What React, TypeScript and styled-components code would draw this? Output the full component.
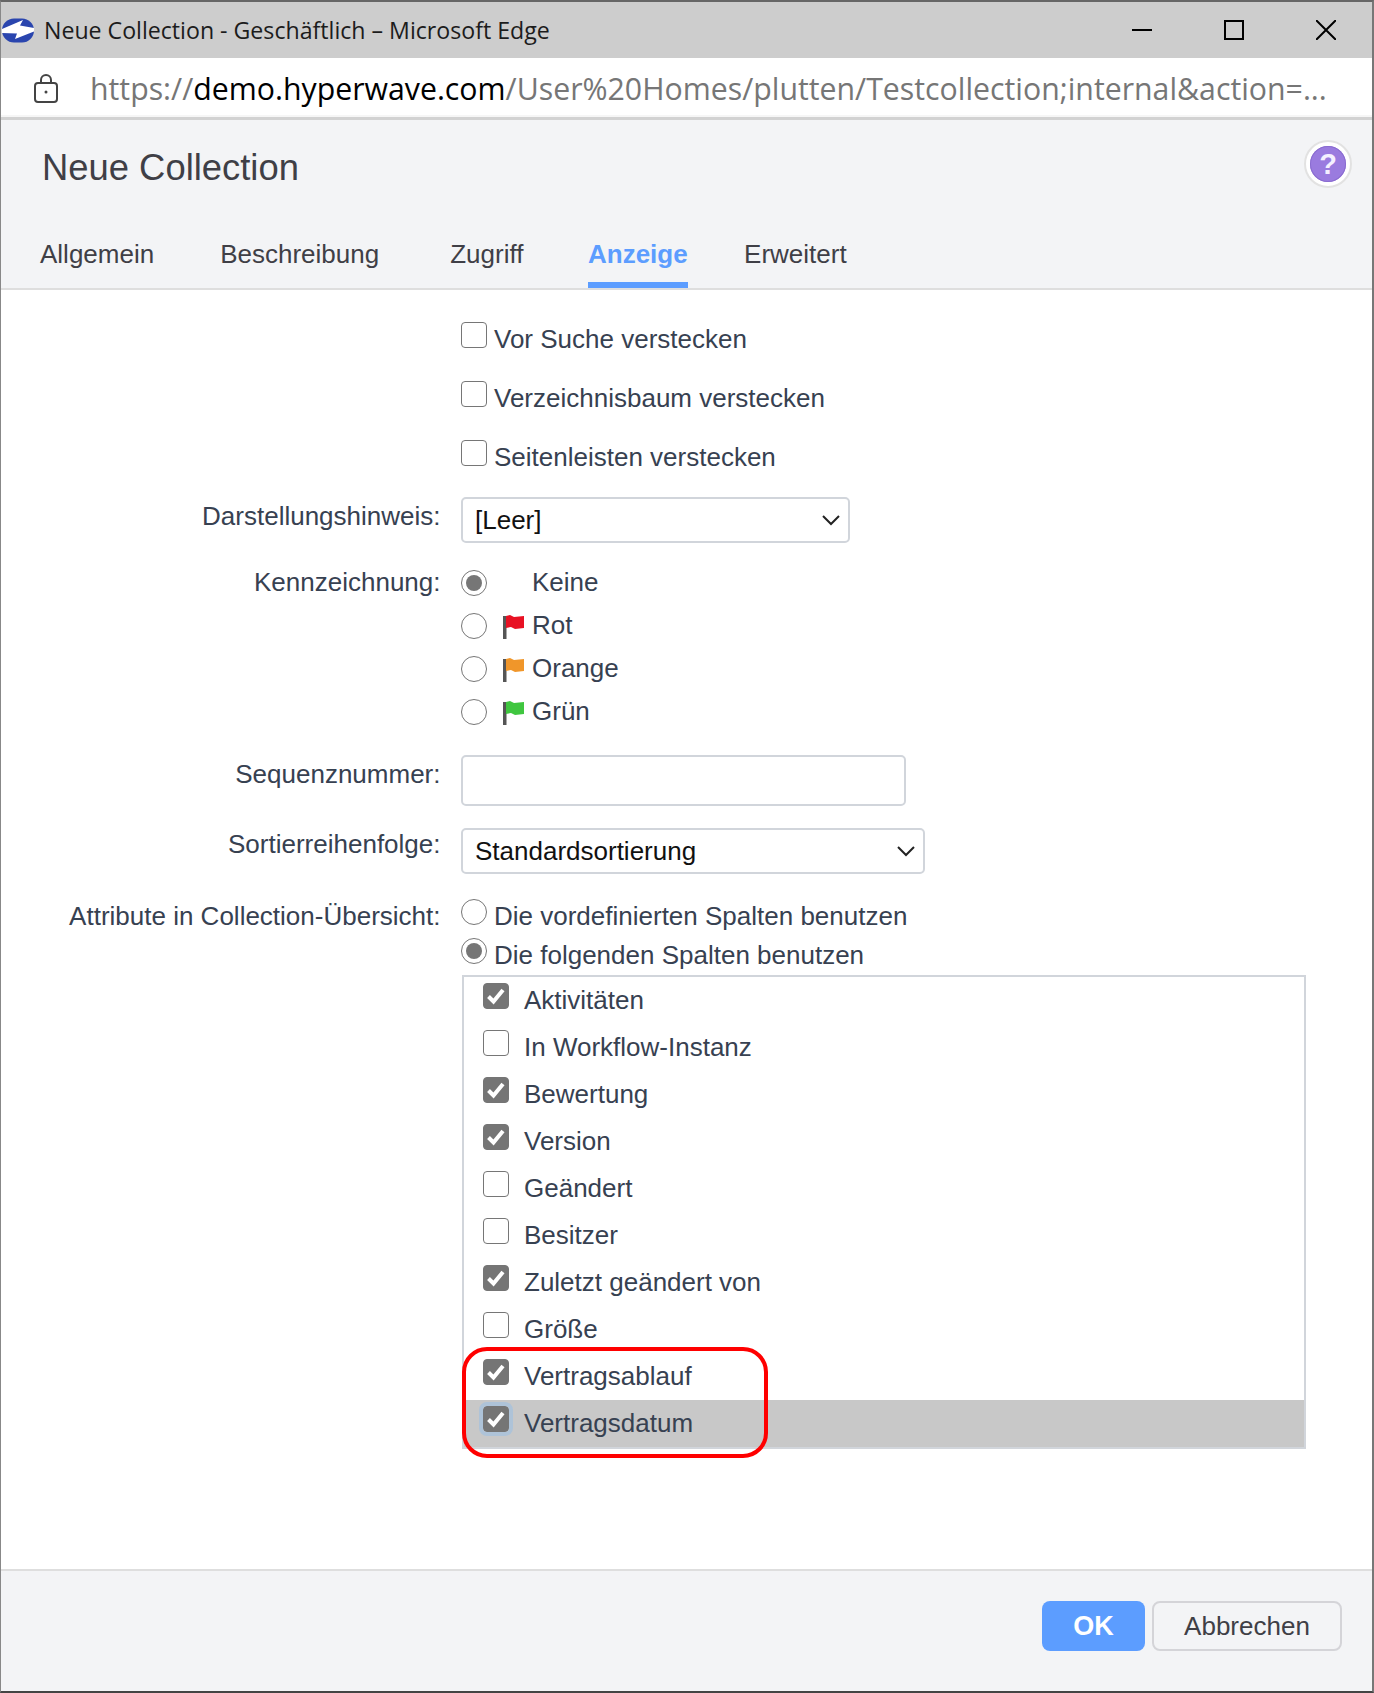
import React from "react";
import styled, { createGlobalStyle } from "styled-components";

const Global = createGlobalStyle`
  html, body { margin: 0; padding: 0; background: #fff; }
  * { box-sizing: border-box; }
`;

const Frame = styled.div`
  position: relative;
  width: 1374px;
  height: 1693px;
  border-top: 2px solid #666;
  border-left: 1px solid #888;
  border-right: 2px solid #777;
  border-bottom: 2px solid #444;
  display: flex;
  flex-direction: column;
  font-family: "Liberation Sans", Arial, sans-serif;
  color: #374151;
  overflow: hidden;
`;

const TitleBar = styled.div`
  height: 56px;
  flex: none;
  background: #cdcdcd;
  display: flex;
  align-items: center;
  padding-left: 1px;
  font-family: "Open Sans", sans-serif;
  font-size: 23.15px;
  color: #1c1c1c;
`;

const TitleText = styled.span`
  margin-left: 9px;
`;

const WinButtons = styled.div`
  margin-left: auto;
  display: flex;
  align-items: center;
  gap: 72px;
  padding-right: 36px;
`;

const AddressBar = styled.div`
  height: 62px;
  flex: none;
  background: #fff;
  border-bottom: 3px solid #d2d2d2;
  box-shadow: inset 0 -2px 0 #f6f6f6;
  display: flex;
  align-items: center;
  padding: 2px 0 0 33px;
  font-family: "Open Sans", sans-serif;
  font-size: 30.27px;
  color: #767676;
  white-space: nowrap;
`;

const Url = styled.span`
  margin-left: 32px;
  b { font-weight: 400; color: #000; }
`;

const Header = styled.div`
  height: 170px;
  flex: none;
  background: #f3f4f6;
  border-bottom: 2px solid #dedede;
  position: relative;
  display: flex;
  flex-direction: column;
`;

const Title = styled.h1`
  margin: 26px 0 0 41px;
  font-size: 36.4px;
  line-height: 44px;
  font-weight: 400;
  color: #3f3f46;
`;

const Help = styled.div`
  position: absolute;
  right: 20px;
  top: 20px;
  width: 48px;
  height: 48px;
  border-radius: 50%;
  background: #fff;
  border: 2px solid #e2e2e2;
  display: flex;
  align-items: center;
  justify-content: center;
`;

const HelpDot = styled.div`
  width: 36px;
  height: 36px;
  border-radius: 50%;
  background: #9a7bdf;
  box-shadow: inset 0 0 0 1px #8a6cd0;
  color: #f4f0ff;
  font-weight: 700;
  font-size: 29px;
  line-height: 36px;
  text-align: center;
`;

const Tabs = styled.div`
  margin-top: auto;
  display: flex;
  height: 55px;
`;

const Tab = styled.div<{ $left: number; $active?: boolean }>`
  margin-left: ${(p) => p.$left}px;
  height: 55px;
  padding-top: 6px;
  font-size: 26px;
  line-height: 30px;
  font-weight: ${(p) => (p.$active ? 700 : 400)};
  color: ${(p) => (p.$active ? "#5c9dff" : "#3f3f46")};
  border-bottom: ${(p) => (p.$active ? "6px solid #5c9dff" : "none")};
`;

const Content = styled.div`
  flex: 1;
  background: #fff;
  padding-top: 34px;
  font-size: 26px;
  position: relative;
`;

const Row = styled.div<{ $top?: number }>`
  display: grid;
  grid-template-columns: 439.5px 1fr;
  column-gap: 20.5px;
  margin-top: ${(p) => p.$top ?? 0}px;
`;

const Label = styled.div<{ $top?: number }>`
  text-align: right;
  line-height: 30px;
  padding-top: ${(p) => p.$top ?? 0}px;
  white-space: nowrap;
`;

const Option = styled.div<{ $h: number }>`
  display: flex;
  align-items: center;
  height: ${(p) => p.$h}px;
  line-height: 30px;
  white-space: nowrap;
`;

const Box = styled.span<{ $checked?: boolean }>`
  flex: none;
  width: 26px;
  height: 26px;
  border-radius: 4px;
  border: 1px solid ${(p) => (p.$checked ? "#757575" : "#767676")};
  background: ${(p) => (p.$checked ? "#757575" : "#fff")};
  display: flex;
  align-items: center;
  justify-content: center;
  margin-right: 7px;
  margin-top: -8px;
`;

const Radio = styled.span<{ $checked?: boolean }>`
  flex: none;
  width: 26px;
  height: 26px;
  border-radius: 50%;
  border: 1px solid #767676;
  background: #fff;
  margin-right: 7px;
  display: flex;
  align-items: center;
  justify-content: center;
  &::after {
    content: "";
    display: ${(p) => (p.$checked ? "block" : "none")};
    width: 16px;
    height: 16px;
    border-radius: 50%;
    background: #767676;
  }
`;

const RaisedRadio = styled(Radio)`
  margin-top: -8px;
`;

const FlagSlot = styled.span`
  flex: none;
  width: 38px;
  height: 24px;
  padding-left: 9px;
  display: flex;
  margin-top: 3px;
`;

const MarkText = styled.span`
  margin-top: -2px;
`;

const Select = styled.div<{ $w: number }>`
  width: ${(p) => p.$w}px;
  height: 46px;
  border: 2px solid #d1d5db;
  border-radius: 5px;
  background: #fff;
  display: flex;
  align-items: center;
  justify-content: space-between;
  padding: 0 7px 0 12px;
  color: #111;
`;

const TextInput = styled.div`
  width: 445px;
  height: 51px;
  border: 2px solid #d1d5db;
  border-radius: 5px;
  background: #fff;
`;

const List = styled.div`
  position: relative;
  width: 844px;
  height: 474px;
  margin-top: 1px;
  border: 2px solid #d1d5db;
  margin-left: 1px;
`;

const ListRow = styled.div<{ $selected?: boolean }>`
  height: 47px;
  display: flex;
  align-items: flex-start;
  padding: 6px 0 0 19px;
  background: ${(p) => (p.$selected ? "#c8c8c8" : "transparent")};
`;

const ListBox = styled(Box)<{ $focus?: boolean }>`
  margin: 0 15px 0 0;
  outline: ${(p) => (p.$focus ? "4px solid #aec3d8" : "none")};
`;

const ListText = styled.span`
  line-height: 30px;
  margin-top: 2px;
`;

const RedMark = styled.div`
  position: absolute;
  left: -2px;
  top: 370px;
  width: 306px;
  height: 111px;
  border: 4px solid #f00;
  border-radius: 25px;
  pointer-events: none;
`;

const Footer = styled.div`
  height: 122px;
  flex: none;
  background: #f3f4f6;
  border-top: 2px solid #dedede;
  display: flex;
  justify-content: flex-end;
  align-items: flex-start;
  gap: 7px;
  padding: 30px 30px 0 0;
`;

const Ok = styled.button`
  width: 103px;
  height: 50px;
  border: none;
  border-radius: 8px;
  background: #5c9dff;
  color: #fff;
  font: 700 27px "Liberation Sans", Arial, sans-serif;
`;

const Cancel = styled.button`
  width: 190px;
  height: 50px;
  border: 2px solid #d4d4d8;
  border-radius: 8px;
  background: #f3f4f6;
  color: #3f3f46;
  font: 400 26px "Liberation Sans", Arial, sans-serif;
`;

const Check = () => (
  <svg width="22" height="22" viewBox="0 0 22 22" fill="none">
    <path d="M3.5 11.5 L8.5 16.5 L18 5" stroke="#fff" strokeWidth="4" />
  </svg>
);

const Chevron = () => (
  <svg width="20" height="12" viewBox="0 0 20 12" fill="none">
    <path d="M2 2 L10 10 L18 2" stroke="#222" strokeWidth="2" />
  </svg>
);

const Flag = ({ color }: { color: string }) => (
  <svg width="22" height="24" viewBox="0 0 22 24">
    <rect x="0" y="1" width="3.5" height="23" fill="#555" />
    <path d="M3 1 L7 0 L11 2 L21 1 L21 13 L12 14 L8 12 L3 13 Z" fill={color} />
  </svg>
);

const Favicon = () => (
  <svg width="33" height="25" viewBox="0 0 33 25">
    <rect x="0" y="0.5" width="32" height="24" rx="12" fill="#2a45ae" />
    <path d="M0 11 L21 2 L18 7.5 L32 10 L32 13.5 L13 21 L15 15.5 L0 15 Z" fill="#fff" />
  </svg>
);

const Lock = () => (
  <svg width="24" height="29" viewBox="0 0 24 29" fill="none" stroke="#444" strokeWidth="2">
    <rect x="1" y="9" width="22" height="19" rx="3" />
    <path d="M7 9 V6 a5 5 0 0 1 10 0 V9" />
    <circle cx="12" cy="18" r="1.5" fill="#444" stroke="none" />
  </svg>
);

const WinMin = () => (
  <svg width="20" height="20"><rect x="0" y="9" width="20" height="2" fill="#000" /></svg>
);
const WinMax = () => (
  <svg width="20" height="20"><rect x="1" y="1" width="18" height="18" fill="none" stroke="#000" strokeWidth="2" /></svg>
);
const WinClose = () => (
  <svg width="20" height="20"><path d="M0 0 L20 20 M20 0 L0 20" stroke="#000" strokeWidth="2" /></svg>
);

const columns: { label: string; checked: boolean }[] = [
  { label: "Aktivitäten", checked: true },
  { label: "In Workflow-Instanz", checked: false },
  { label: "Bewertung", checked: true },
  { label: "Version", checked: true },
  { label: "Geändert", checked: false },
  { label: "Besitzer", checked: false },
  { label: "Zuletzt geändert von", checked: true },
  { label: "Größe", checked: false },
  { label: "Vertragsablauf", checked: true },
  { label: "Vertragsdatum", checked: true },
];

const marks = [
  { label: "Keine", flag: "", checked: true },
  { label: "Rot", flag: "#e81123", checked: false },
  { label: "Orange", flag: "#f0962a", checked: false },
  { label: "Grün", flag: "#3fc63f", checked: false },
];

export default function App() {
  return (
    <Frame>
      <Global />
      <TitleBar>
        <Favicon />
        <TitleText>Neue Collection - Geschäftlich – Microsoft Edge</TitleText>
        <WinButtons>
          <WinMin />
          <WinMax />
          <WinClose />
        </WinButtons>
      </TitleBar>
      <AddressBar>
        <Lock />
        <Url>
          https://<b>demo.hyperwave.com</b>/User%20Homes/plutten/Testcollection;internal&amp;action=...
        </Url>
      </AddressBar>
      <Header>
        <Title>Neue Collection</Title>
        <Help>
          <HelpDot>?</HelpDot>
        </Help>
        <Tabs>
          <Tab $left={39}>Allgemein</Tab>
          <Tab $left={66}>Beschreibung</Tab>
          <Tab $left={71}>Zugriff</Tab>
          <Tab $left={64.6} $active>Anzeige</Tab>
          <Tab $left={56.4}>Erweitert</Tab>
        </Tabs>
      </Header>
      <Content>
        {["Vor Suche verstecken", "Verzeichnisbaum verstecken", "Seitenleisten verstecken"].map((t, i) => (
          <Row key={t} $top={i ? 29 : 0}>
            <span />
            <Option $h={30}>
              <Box />
              {t}
            </Option>
          </Row>
        ))}
        <Row $top={25}>
          <Label $top={4}>Darstellungshinweis:</Label>
          <Select $w={389}>
            [Leer]
            <Chevron />
          </Select>
        </Row>
        <Row $top={18}>
          <Label $top={6}>Kennzeichnung:</Label>
          <div>
            {marks.map((m) => (
              <Option key={m.label} $h={43}>
                <Radio $checked={m.checked} />
                <FlagSlot>{m.flag && <Flag color={m.flag} />}</FlagSlot>
                <MarkText>{m.label}</MarkText>
              </Option>
            ))}
          </div>
        </Row>
        <Row $top={22}>
          <Label $top={4}>Sequenznummer:</Label>
          <TextInput />
        </Row>
        <Row $top={22}>
          <Label $top={1}>Sortierreihenfolge:</Label>
          <Select $w={464}>
            Standardsortierung
            <Chevron />
          </Select>
        </Row>
        <Row $top={22}>
          <Label $top={5}>Attribute in Collection-Übersicht:</Label>
          <div>
            <Option $h={39}>
              <RaisedRadio />
              Die vordefinierten Spalten benutzen
            </Option>
            <Option $h={39}>
              <RaisedRadio $checked />
              Die folgenden Spalten benutzen
            </Option>
            <List>
              {columns.map((c, i) => (
                <ListRow key={c.label} $selected={i === 9}>
                  <ListBox $checked={c.checked} $focus={i === 9}>
                    {c.checked && <Check />}
                  </ListBox>
                  <ListText>{c.label}</ListText>
                </ListRow>
              ))}
              <RedMark />
            </List>
          </div>
        </Row>
      </Content>
      <Footer>
        <Ok>OK</Ok>
        <Cancel>Abbrechen</Cancel>
      </Footer>
    </Frame>
  );
}
